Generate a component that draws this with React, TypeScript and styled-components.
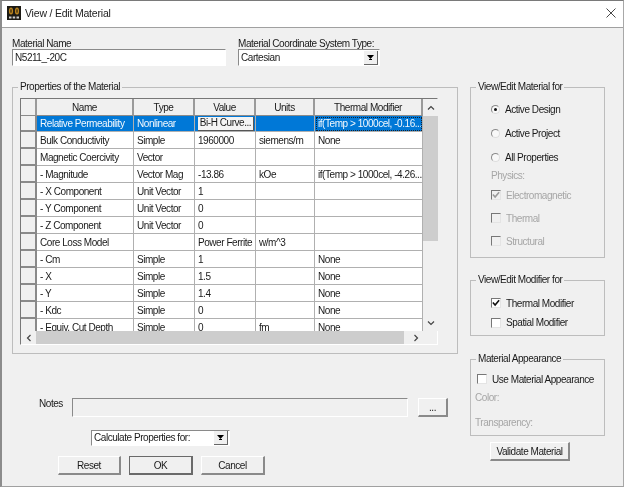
import { FC, ReactNode } from 'react';
import styled, { createGlobalStyle } from 'styled-components';

const GlobalStyle = createGlobalStyle`
  html, body {
    margin: 0;
    padding: 0;
    background: #fff;
  }
  body {
    font-family: "Liberation Sans", Arial, sans-serif;
    font-size: 10px;
    letter-spacing: -0.45px;
    color: #1a1a1a;
  }
`;

const Window = styled.div`
  width: 624px;
  height: 487px;
  box-sizing: border-box;
  background: #f0f0f0;
  border-top: 1px solid #7a7a7a;
  border-left: 2px solid #8c8c8c;
  border-right: 1px solid #a8a8a8;
  border-bottom: 1px solid #a0a0a0;
  overflow: hidden;
  filter: blur(0.3px);
`;

const TitleBar = styled.div`
  height: 27px;
  box-sizing: border-box;
  background: #fff;
  border-bottom: 1px solid #a0a0a0;
  display: flex;
  align-items: center;
  padding: 0 7px 2px 5px;
  gap: 4px;
`;

const TitleText = styled.span`
  flex: 1;
  font-size: 10.5px;
  letter-spacing: -0.2px;
  color: #222;
`;

const Content = styled.div`
  display: flex;
  gap: 12px;
  padding: 10px 0 0 10px;
`;

const LeftColumn = styled.div`
  width: 446px;
  display: flex;
  flex-direction: column;
`;

const RightColumn = styled.div`
  width: 136px;
  display: flex;
  flex-direction: column;
  align-items: flex-start;
  padding-top: 43px;
`;

const TopRow = styled.div`
  display: flex;
  gap: 12px;
`;

const Field = styled.label<{ $width: number }>`
  width: ${(p) => p.$width}px;
  display: flex;
  flex-direction: column;
  line-height: 11px;
  white-space: nowrap;
`;

const SunkenBox = styled.div<{ $bg?: string }>`
  box-sizing: border-box;
  height: 17px;
  background: ${(p) => p.$bg ?? '#fff'};
  border-top: 1px solid #8a8a8a;
  border-left: 1px solid #8a8a8a;
  border-right: 1px solid #fff;
  border-bottom: 1px solid #fff;
  display: flex;
  align-items: center;
  padding-left: 2px;
  line-height: 14px;
`;

const ComboBox = styled(SunkenBox)`
  padding-right: 1px;
  justify-content: space-between;
`;

const ComboButton = styled.span`
  width: 14px;
  height: 14px;
  box-sizing: border-box;
  background: #f0f0f0;
  border-right: 1px solid #666;
  border-bottom: 1px solid #666;
  display: flex;
  align-items: center;
  justify-content: center;
`;

const GroupBox = styled.fieldset<{ $height: number; $width?: number }>`
  box-sizing: border-box;
  margin: 0;
  height: ${(p) => p.$height}px;
  width: ${(p) => (p.$width ? `${p.$width}px` : 'auto')};
  border: 1px solid #bdbdbd;
  padding: 0;
  min-width: 0;
`;

const GroupTitle = styled.legend`
  margin-left: 5px;
  padding: 0 2px;
  line-height: 12px;
  white-space: nowrap;
`;

const PropertiesBox = styled(GroupBox)`
  margin-top: 15px;
  padding-top: 5px;
`;

const TableFrame = styled.div`
  box-sizing: border-box;
  width: 418px;
  height: 247px;
  margin-left: 7px;
  border-top: 1px solid #777;
  border-left: 1px solid #777;
  border-right: 1px solid #fff;
  border-bottom: 1px solid #fff;
  display: grid;
  grid-template-columns: 402px 15px;
  grid-template-rows: 232px 13px;
`;

const TableClip = styled.div`
  overflow: hidden;
  background: #fff;
`;

const GridTable = styled.table`
  border-collapse: separate;
  border-spacing: 0;
  table-layout: fixed;
  width: 402px;
  tbody tr:first-child td {
    height: 16px;
  }
`;

const HeadCell = styled.th`
  box-sizing: border-box;
  height: 17px;
  padding: 0;
  background: #f0f0f0;
  font-weight: normal;
  text-align: center;
  border-right: 2px solid #9a9a9a;
  border-bottom: 1px solid #8a8a8a;
`;

const RowHeader = styled.td`
  box-sizing: border-box;
  height: 17px;
  padding: 0;
  background: #f0f0f0;
  border-right: 2px solid #8a8a8a;
  border-bottom: 2px solid #8a8a8a;
`;

const Cell = styled.td<{ $selected?: boolean; $focused?: boolean }>`
  box-sizing: border-box;
  height: 17px;
  padding: 0 0 0 3px;
  white-space: nowrap;
  overflow: hidden;
  background: ${(p) => (p.$selected ? '#0078d7' : '#fff')};
  color: ${(p) => (p.$selected ? '#f2f8fd' : '#1a1a1a')};
  border-right: 1px solid #b0b0b0;
  border-bottom: 1px solid #b0b0b0;
  ${(p) => (p.$focused ? 'outline: 1px dotted #123; outline-offset: -2px;' : '')}
`;

const CurveButton = styled.span`
  display: block;
  box-sizing: border-box;
  width: 56px;
  height: 14px;
  background: #f4f4f4;
  color: #1a1a1a;
  text-align: center;
  line-height: 12px;
  border-right: 1px solid #555;
  border-bottom: 1px solid #555;
`;

const ScrollTrack = styled.div<{ $vertical?: boolean }>`
  display: flex;
  flex-direction: ${(p) => (p.$vertical ? 'column' : 'row')};
  background: #f0f0f0;
`;

const ScrollArrow = styled.span<{ $vertical?: boolean }>`
  flex: none;
  width: 15px;
  height: ${(p) => (p.$vertical ? '17px' : '13px')};
  display: flex;
  align-items: center;
  justify-content: center;
`;

const ScrollThumb = styled.span<{ $size: number; $vertical?: boolean }>`
  flex: none;
  background: #cdcdcd;
  ${(p) => (p.$vertical ? `height: ${p.$size}px;` : `width: ${p.$size}px;`)}
`;

const ScrollGap = styled.span`
  flex: 1;
`;

const NotesRow = styled.div`
  margin-top: 44px;
  display: flex;
  align-items: flex-start;
  padding-left: 27px;
`;

const NotesLabel = styled.span`
  width: 33px;
  line-height: 12px;
`;

const NotesField = styled(SunkenBox)`
  width: 336px;
  height: 19px;
  margin-right: 10px;
`;

const RaisedButton = styled.button<{ $width: number; $default?: boolean }>`
  box-sizing: border-box;
  width: ${(p) => p.$width}px;
  height: 19px;
  padding: 0;
  margin: 0;
  font: inherit;
  letter-spacing: inherit;
  white-space: nowrap;
  color: #1a1a1a;
  background: #f0f0f0;
  border-style: solid;
  border-width: 1px 2px 2px 1px;
  border-color: ${(p) => (p.$default ? '#6a6a6a' : '#fff #8a8a8a #8a8a8a #fff')};
`;

const CalcBox = styled(ComboBox)`
  width: 139px;
  height: 16px;
  margin: 13px 0 0 79px;
`;

const ButtonRow = styled.div`
  display: flex;
  gap: 8px;
  margin: 10px 0 0 46px;
`;

const OptionRow = styled.div<{ $indent: number; $height: number; $disabled?: boolean }>`
  height: ${(p) => p.$height}px;
  display: flex;
  align-items: center;
  gap: 5px;
  padding-left: ${(p) => p.$indent}px;
  white-space: nowrap;
  color: ${(p) => (p.$disabled ? '#a6a6a6' : '#1a1a1a')};
`;

const RadioMark = styled.span<{ $checked?: boolean }>`
  flex: none;
  width: 9px;
  height: 9px;
  box-sizing: border-box;
  border-radius: 50%;
  background: #f8f8f8;
  border: 1px solid #8a8a8a;
  border-right-color: #ddd;
  border-bottom-color: #ddd;
  display: flex;
  align-items: center;
  justify-content: center;
  &::after {
    content: '';
    display: ${(p) => (p.$checked ? 'block' : 'none')};
    width: 3px;
    height: 3px;
    border-radius: 50%;
    background: #111;
  }
`;

const CheckMark = styled.span<{ $muted?: boolean }>`
  flex: none;
  width: 10px;
  height: 10px;
  box-sizing: border-box;
  background: ${(p) => (p.$muted ? '#f0f0f0' : '#fff')};
  border-top: 1px solid #777;
  border-left: 1px solid #777;
  border-right: 1px solid #e4e4e4;
  border-bottom: 1px solid #e4e4e4;
  display: flex;
  align-items: center;
  justify-content: center;
`;

const MutedLine = styled.div<{ $height: number }>`
  height: ${(p) => p.$height}px;
  padding-left: 4px;
  color: #a6a6a6;
  display: flex;
  align-items: center;
`;

const MaterialForBox = styled(GroupBox)`
  padding-top: 4px;
`;

const ModifierBox = styled(GroupBox)`
  margin-top: 16px;
  padding-top: 7px;
`;

const AppearanceBox = styled(GroupBox)`
  margin-top: 17px;
  padding-top: 5px;
`;

const ValidateButton = styled(RaisedButton)`
  margin: 6px 0 0 20px;
`;

const AppIcon = () => (
  <svg width="14" height="14" viewBox="0 0 14 14">
    <rect width="14" height="14" fill="#1c1a14" />
    <ellipse cx="4" cy="5" rx="2.1" ry="3.6" fill="#b9831f" />
    <ellipse cx="10" cy="5" rx="2.1" ry="3.6" fill="#b9831f" />
    <ellipse cx="4" cy="5" rx="0.8" ry="2" fill="#4a3710" />
    <ellipse cx="10" cy="5" rx="0.8" ry="2" fill="#4a3710" />
    <rect x="2" y="10.5" width="2.5" height="2" fill="#cfcfcf" />
    <rect x="5.7" y="10.5" width="2.5" height="2" fill="#cfcfcf" />
    <rect x="9.5" y="10.5" width="2.5" height="2" fill="#cfcfcf" />
  </svg>
);

const CloseIcon = () => (
  <svg width="10" height="10" viewBox="0 0 10 10">
    <path d="M0.5 0.5 L9.5 9.5 M9.5 0.5 L0.5 9.5" stroke="#333" strokeWidth="0.9" fill="none" />
  </svg>
);

const DropArrow = () => (
  <svg width="7" height="5" viewBox="0 0 7 5">
    <path d="M0 0 H7 L3.5 4 Z" fill="#000" />
    <rect x="2" y="4" width="3" height="1" fill="#000" />
  </svg>
);

const Chevron: FC<{ dir: 'up' | 'down' | 'left' | 'right' }> = ({ dir }) => {
  const paths = {
    up: 'M1 5.5 L4 2.5 L7 5.5',
    down: 'M1 2.5 L4 5.5 L7 2.5',
    left: 'M5.5 1 L2.5 4 L5.5 7',
    right: 'M2.5 1 L5.5 4 L2.5 7',
  };
  return (
    <svg width="8" height="8" viewBox="0 0 8 8">
      <path d={paths[dir]} stroke="#444" strokeWidth="1.2" fill="none" />
    </svg>
  );
};

const Tick: FC<{ color: string }> = ({ color }) => (
  <svg width="8" height="8" viewBox="0 0 9 9">
    <path d="M1 4 L3.5 6.8 L8 1.5" stroke={color} strokeWidth="1.8" fill="none" />
  </svg>
);

type PropRow = {
  name: string;
  type: string;
  value?: ReactNode;
  units?: string;
  modifier?: string;
};

const rows: PropRow[] = [
  { name: 'Relative Permeability', type: 'Nonlinear', value: <CurveButton>Bi-H Curve...</CurveButton>, modifier: 'if(Temp > 1000cel, -0.16...' },
  { name: 'Bulk Conductivity', type: 'Simple', value: '1960000', units: 'siemens/m', modifier: 'None' },
  { name: 'Magnetic Coercivity', type: 'Vector' },
  { name: '-  Magnitude', type: 'Vector Mag', value: '-13.86', units: 'kOe', modifier: 'if(Temp > 1000cel, -4.26...' },
  { name: '-  X Component', type: 'Unit Vector', value: '1' },
  { name: '-  Y Component', type: 'Unit Vector', value: '0' },
  { name: '-  Z Component', type: 'Unit Vector', value: '0' },
  { name: 'Core Loss Model', type: '', value: 'Power Ferrite', units: 'w/m^3' },
  { name: '-  Cm', type: 'Simple', value: '1', modifier: 'None' },
  { name: '-  X', type: 'Simple', value: '1.5', modifier: 'None' },
  { name: '-  Y', type: 'Simple', value: '1.4', modifier: 'None' },
  { name: '-  Kdc', type: 'Simple', value: '0', modifier: 'None' },
  { name: '-  Equiv. Cut Depth', type: 'Simple', value: '0', units: 'fm', modifier: 'None' },
];

const columnWidths = [16, 97, 61, 61, 59, 108];
const headings = ['', 'Name', 'Type', 'Value', 'Units', 'Thermal Modifier'];

export default function App() {
  return (
    <Window>
      <GlobalStyle />
      <TitleBar>
        <AppIcon />
        <TitleText>View / Edit Material</TitleText>
        <CloseIcon />
      </TitleBar>
      <Content>
        <LeftColumn>
          <TopRow>
            <Field $width={214}>
              Material Name
              <SunkenBox>N5211_-20C</SunkenBox>
            </Field>
            <Field $width={142}>
              Material Coordinate System Type:
              <ComboBox>
                Cartesian
                <ComboButton>
                  <DropArrow />
                </ComboButton>
              </ComboBox>
            </Field>
          </TopRow>

          <PropertiesBox $height={273}>
            <GroupTitle>Properties of the Material</GroupTitle>
            <TableFrame>
              <TableClip>
                <GridTable>
                  <colgroup>
                    {columnWidths.map((w, i) => (
                      <col key={i} style={{ width: w }} />
                    ))}
                  </colgroup>
                  <thead>
                    <tr>
                      {headings.map((h, i) => (
                        <HeadCell key={i}>{h}</HeadCell>
                      ))}
                    </tr>
                  </thead>
                  <tbody>
                    {rows.map((r, i) => (
                      <tr key={r.name}>
                        <RowHeader />
                        <Cell $selected={i === 0}>{r.name}</Cell>
                        <Cell $selected={i === 0}>{r.type}</Cell>
                        <Cell $selected={i === 0}>{r.value}</Cell>
                        <Cell $selected={i === 0}>{r.units}</Cell>
                        <Cell $selected={i === 0} $focused={i === 0}>
                          {r.modifier}
                        </Cell>
                      </tr>
                    ))}
                  </tbody>
                </GridTable>
              </TableClip>
              <ScrollTrack $vertical>
                <ScrollArrow $vertical>
                  <Chevron dir="up" />
                </ScrollArrow>
                <ScrollThumb $vertical $size={125} />
                <ScrollGap />
                <ScrollArrow $vertical>
                  <Chevron dir="down" />
                </ScrollArrow>
              </ScrollTrack>
              <ScrollTrack>
                <ScrollArrow>
                  <Chevron dir="left" />
                </ScrollArrow>
                <ScrollThumb $size={368} />
                <ScrollGap />
                <ScrollArrow>
                  <Chevron dir="right" />
                </ScrollArrow>
              </ScrollTrack>
            </TableFrame>
          </PropertiesBox>

          <NotesRow>
            <NotesLabel>Notes</NotesLabel>
            <NotesField $bg="#f0f0f0" />
            <RaisedButton $width={30}>...</RaisedButton>
          </NotesRow>

          <CalcBox>
            Calculate Properties for:
            <ComboButton>
              <DropArrow />
            </ComboButton>
          </CalcBox>

          <ButtonRow>
            <RaisedButton $width={63}>Reset</RaisedButton>
            <RaisedButton $width={64} $default>
              OK
            </RaisedButton>
            <RaisedButton $width={64}>Cancel</RaisedButton>
          </ButtonRow>
        </LeftColumn>

        <RightColumn>
          <MaterialForBox $height={177} $width={135}>
            <GroupTitle>View/Edit Material for</GroupTitle>
            <OptionRow $indent={20} $height={24}>
              <RadioMark $checked />
              Active Design
            </OptionRow>
            <OptionRow $indent={20} $height={24}>
              <RadioMark />
              Active Project
            </OptionRow>
            <OptionRow $indent={20} $height={24}>
              <RadioMark />
              All Properties
            </OptionRow>
            <OptionRow $indent={20} $height={12} $disabled>
              Physics:
            </OptionRow>
            <OptionRow $indent={20} $height={28} $disabled>
              <CheckMark $muted>
                <Tick color="#9a9a9a" />
              </CheckMark>
              Electromagnetic
            </OptionRow>
            <OptionRow $indent={20} $height={18} $disabled>
              <CheckMark $muted />
              Thermal
            </OptionRow>
            <OptionRow $indent={20} $height={28} $disabled>
              <CheckMark $muted />
              Structural
            </OptionRow>
          </MaterialForBox>

          <ModifierBox $height={62} $width={135}>
            <GroupTitle>View/Edit Modifier for</GroupTitle>
            <OptionRow $indent={20} $height={20}>
              <CheckMark>
                <Tick color="#111" />
              </CheckMark>
              Thermal Modifier
            </OptionRow>
            <OptionRow $indent={20} $height={19}>
              <CheckMark />
              Spatial Modifier
            </OptionRow>
          </ModifierBox>

          <AppearanceBox $height={83} $width={135}>
            <GroupTitle>Material Appearance</GroupTitle>
            <OptionRow $indent={6} $height={18}>
              <CheckMark />
              Use Material Appearance
            </OptionRow>
            <MutedLine $height={18}>Color:</MutedLine>
            <MutedLine $height={32}>Transparency:</MutedLine>
          </AppearanceBox>

          <ValidateButton $width={80}>Validate Material</ValidateButton>
        </RightColumn>
      </Content>
    </Window>
  );
}
